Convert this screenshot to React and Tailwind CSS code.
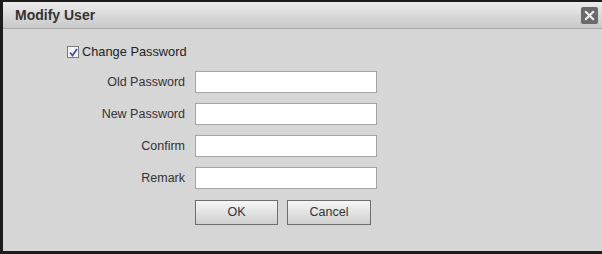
import React from 'react';

const rows = ['Old Password', 'New Password', 'Confirm', 'Remark'];

export default function App() {
  return (
    <div
      className="w-[602px] h-[254px] bg-[#1c1c1c] pl-[3px] pt-[2px] pb-[3px] overflow-hidden"
      style={{ fontFamily: '"Liberation Sans", Arial, sans-serif' }}
    >
      <div className="h-full bg-[#d6d6d6] flex flex-col">
        <div className="h-[27px] shrink-0 flex items-center justify-between pl-[12px] pr-[4px] bg-gradient-to-b from-[#ececec] to-[#c8c8c8] border-b border-[#aaaaaa]">
          <span className="text-[14px] font-bold text-[#333]">Modify User</span>
          <div className="w-[17px] h-[17px] rounded-[2px] bg-[#6a6a6a] flex items-center justify-center">
            <svg width="11" height="11" viewBox="0 0 11 11">
              <path d="M2 2 L9 9 M9 2 L2 9" stroke="#eee" strokeWidth="2.2" strokeLinecap="square" />
            </svg>
          </div>
        </div>
        <div className="flex flex-col pt-[15px]">
          <div className="flex items-center h-[16px] pl-[64px] gap-[3px]">
            <div className="w-[12px] h-[12px] border border-[#7a7a7a] bg-[#f4f4f4] flex items-center justify-center">
              <svg width="9" height="9" viewBox="0 0 9 9">
                <path d="M1 4.5 L3.5 7.5 L8 1" stroke="#3a55a8" strokeWidth="1.8" fill="none" />
              </svg>
            </div>
            <span className="text-[12.8px] text-[#222]">Change Password</span>
          </div>
          <div className="flex flex-col gap-[10px] mt-[11px]">
            {rows.map((label) => (
              <div key={label} className="flex items-center h-[22px]">
                <span className="w-[182px] text-right text-[12.5px] text-[#333]">{label}</span>
                <input
                  type="text"
                  className="ml-[10px] w-[182px] h-[22px] bg-white border border-[#a4a4a4] outline-none"
                />
              </div>
            ))}
          </div>
          <div className="flex gap-[9px] pl-[192px] mt-[11px]">
            <button
              type="button"
              className="w-[83px] h-[25px] border border-[#6e6e6e] bg-gradient-to-b from-[#f6f6f6] to-[#cfcfcf] text-[12.5px] text-[#333]"
            >
              OK
            </button>
            <button
              type="button"
              className="w-[84px] h-[25px] border border-[#6e6e6e] bg-gradient-to-b from-[#f6f6f6] to-[#cfcfcf] text-[12.5px] text-[#333]"
            >
              Cancel
            </button>
          </div>
        </div>
      </div>
    </div>
  );
}
